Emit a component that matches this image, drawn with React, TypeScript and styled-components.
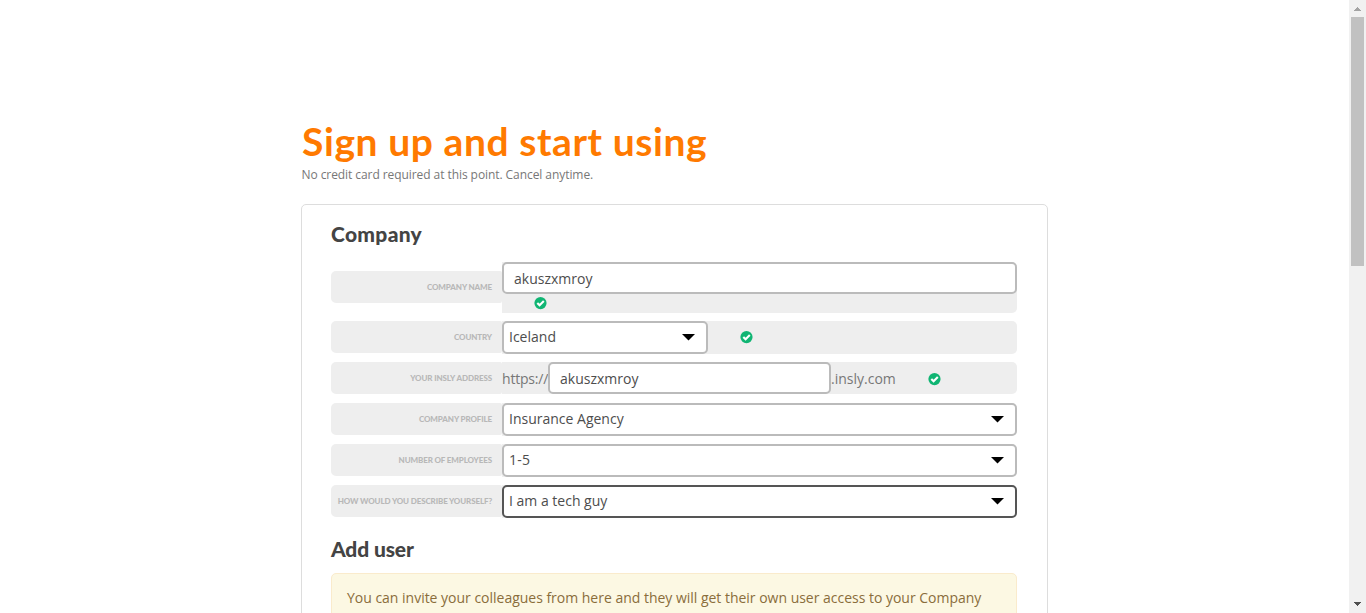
import React from 'react';
import styled, { createGlobalStyle } from 'styled-components';

const GlobalStyle = createGlobalStyle`
  * { box-sizing: border-box; }
  html, body { margin: 0; height: 100%; overflow: hidden; background: #fff; }
  body { font-family: "Open Sans", "Noto Sans", sans-serif; font-size: 14px; color: #4d4d4d; }
`;

const Shell = styled.div`
  display: flex;
  height: 100vh;
  overflow: hidden;
`;

const Page = styled.main`
  flex: 1;
  display: flex;
  justify-content: center;
  padding-top: 118px;
  overflow: hidden;
`;

const Column = styled.div`
  width: 747px;
  flex-shrink: 0;
`;

const Title = styled.h1`
  margin: 0;
  padding-left: 1px;
  font: 700 39px/46px Lato, sans-serif;
  letter-spacing: 0.58px;
  color: #ff7a00;
  white-space: nowrap;
`;

const Subtitle = styled.p`
  margin: 2px 0 20px;
  padding-left: 0.5px;
  font-size: 12px;
  line-height: 18px;
  letter-spacing: -0.07px;
  color: #777;
`;

const Panel = styled.section`
  height: 700px;
  padding: 16px 30px 0 29px;
  border: 1px solid #ddd;
  border-radius: 5px;
`;

const Heading = styled.h2<{ $track?: number }>`
  margin: 0;
  font: 900 21px/26px Lato, sans-serif;
  letter-spacing: ${p => p.$track ?? 0}px;
  color: #444;
`;

const Rows = styled.div`
  display: flex;
  flex-direction: column;
  gap: 8px;
  margin: 15px 0 18px;
`;

const Row = styled.div`
  display: flex;
  align-items: flex-start;
  min-height: 33px;
`;

const Label = styled.div<{ $drop?: number }>`
  display: flex;
  align-items: center;
  justify-content: flex-end;
  width: 171px;
  height: 32px;
  margin-top: ${p => p.$drop ?? 0}px;
  padding-right: 10px;
  border-radius: 5px 2px 2px 5px;
  background: #eee;
  color: #b8b8b8;
  font: 900 8px/12px Lato, sans-serif;
  letter-spacing: -0.12px;
  text-transform: uppercase;
  white-space: nowrap;
`;

const Field = styled.div<{ $height?: number; $wrap?: boolean }>`
  display: flex;
  flex-wrap: ${p => (p.$wrap ? 'wrap' : 'nowrap')};
  align-items: center;
  align-content: flex-start;
  row-gap: 3px;
  width: 515px;
  height: ${p => p.$height ?? 33}px;
  border-radius: 0 5px 5px 0;
  background: #eee;
`;

const TextBox = styled.div<{ $width: number }>`
  width: ${p => p.$width}px;
  height: 32px;
  padding: 1px 10px 0;
  border: 2px solid #bbb;
  border-radius: 5px;
  background: #fff;
  line-height: 28px;
`;

const SelectBox = styled.div<{ $width?: number; $focused?: boolean; $track?: number }>`
  display: flex;
  align-items: center;
  justify-content: space-between;
  width: ${p => p.$width ?? 515}px;
  height: 33px;
  padding: 0 11px 0 5px;
  border: 2px solid ${p => (p.$focused ? '#555' : '#bbb')};
  border-radius: 5px;
  background: #fff;
  line-height: 27px;
  letter-spacing: ${p => p.$track ?? 0}px;
`;

const SelectValue = styled.span`
  padding-bottom: 2px;
`;

const Arrow = styled.svg`
  display: block;
  width: 13px;
  height: 7px;
`;

const Affix = styled.span<{ $width: number; $track?: number }>`
  width: ${p => p.$width}px;
  padding-top: 1px;
  color: #777;
  letter-spacing: ${p => p.$track ?? 0}px;
`;

const Tick = styled.svg<{ $drop?: number }>`
  display: block;
  flex-shrink: 0;
  width: 13px;
  height: 13px;
  margin: ${p => p.$drop ?? 0}px 0 0 32px;
`;

const Notice = styled.div`
  height: 120px;
  margin-top: 11px;
  padding: 14px 15px;
  border: 1px solid #faebcc;
  border-radius: 5px;
  background: #fcf8e3;
  color: #8a6d3b;
  line-height: 20px;
  letter-spacing: -0.015px;
`;

const Scrollbar = styled.div`
  display: flex;
  flex-direction: column;
  justify-content: space-between;
  align-items: center;
  width: 17px;
  background: #f1f1f1;
`;

const ScrollTop = styled.div`
  display: flex;
  flex-direction: column;
  align-items: center;
`;

const Thumb = styled.div`
  width: 13px;
  height: 249px;
  background: #c1c1c1;
`;

const ScrollArrow = styled.svg`
  display: block;
  width: 17px;
  height: 17px;
`;

const Caret = () => (
  <Arrow viewBox="0 0 13 7"><path d="M0 0h13L6.5 6.6z" fill="#000" /></Arrow>
);

const Valid = ({ drop }: { drop?: number }) => (
  <Tick viewBox="0 0 13 13" $drop={drop}>
    <circle cx="6.5" cy="6.1" r="6.1" fill="#10b573" />
    <path d="M3.3 6l2.3 2.3 4.2-4.2" fill="none" stroke="#fff" strokeWidth="2.1" />
  </Tick>
);

export default function App() {
  return (
    <Shell>
      <GlobalStyle />
      <Page>
        <Column>
          <Title>Sign up and start using</Title>
          <Subtitle>No credit card required at this point. Cancel anytime.</Subtitle>
          <Panel>
            <Heading $track={0.3}>Company</Heading>
            <Rows>
              <Row>
                <Label $drop={9}>Company name</Label>
                <Field $height={51} $wrap>
                  <TextBox $width={515}>akuszxmroy</TextBox>
                  <Valid />
                </Field>
              </Row>
              <Row>
                <Label>Country</Label>
                <Field>
                  <SelectBox $width={206}><SelectValue>Iceland</SelectValue><Caret /></SelectBox>
                  <Valid />
                </Field>
              </Row>
              <Row>
                <Label>Your Insly address</Label>
                <Field $height={32}>
                  <Affix $width={46} $track={-0.2}>https://</Affix>
                  <TextBox $width={283}>akuszxmroy</TextBox>
                  <Affix $width={65}>.insly.com</Affix>
                  <Valid drop={3} />
                </Field>
              </Row>
              <Row>
                <Label>Company profile</Label>
                <Field>
                  <SelectBox><SelectValue>Insurance Agency</SelectValue><Caret /></SelectBox>
                </Field>
              </Row>
              <Row>
                <Label>Number of employees</Label>
                <Field>
                  <SelectBox $track={0.2}><SelectValue>1-5</SelectValue><Caret /></SelectBox>
                </Field>
              </Row>
              <Row>
                <Label>How would you describe yourself?</Label>
                <Field>
                  <SelectBox $focused><SelectValue>I am a tech guy</SelectValue><Caret /></SelectBox>
                </Field>
              </Row>
            </Rows>
            <Heading $track={-0.15}>Add user</Heading>
            <Notice>
              You can invite your colleagues from here and they will get their own user access to your Company
            </Notice>
          </Panel>
        </Column>
      </Page>
      <Scrollbar>
        <ScrollTop>
          <ScrollArrow viewBox="0 0 17 17" shapeRendering="crispEdges">
            <path d="M5 11h7v-1h-1v-1h-1v-1h-1v-1h-1v1h-1v1h-1v1h-1z" fill="#a3a3a3" />
          </ScrollArrow>
          <Thumb />
        </ScrollTop>
        <ScrollArrow viewBox="0 0 17 17" shapeRendering="crispEdges">
          <path d="M5 6h7v1h-1v1h-1v1h-1v1h-1v-1h-1v-1h-1v-1h-1z" fill="#505050" />
        </ScrollArrow>
      </Scrollbar>
    </Shell>
  );
}
